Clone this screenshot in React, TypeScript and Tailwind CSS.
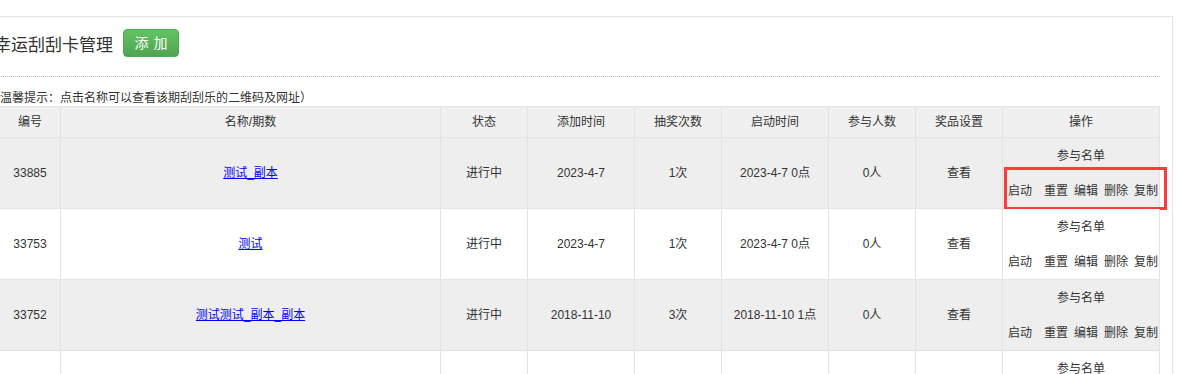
import React from "react";

const cols = "grid-cols-[61px_380px_87px_107px_87px_107px_87px_87px_157px]";

const headers = ["编号", "名称/期数", "状态", "添加时间", "抽奖次数", "启动时间", "参与人数", "奖品设置", "操作"];

const rows = [
  { id: "33885", name: "测试_副本", status: "进行中", added: "2023-4-7", times: "1次", start: "2023-4-7 0点", people: "0人", marked: true },
  { id: "33753", name: "测试", status: "进行中", added: "2023-4-7", times: "1次", start: "2023-4-7 0点", people: "0人" },
  { id: "33752", name: "测试测试_副本_副本", status: "进行中", added: "2018-11-10", times: "3次", start: "2018-11-10 1点", people: "0人" },
  { id: "33751", name: "测试", status: "进行中", added: "2018-11-10", times: "1次", start: "2018-11-10 0点", people: "0人" },
];

function Cell({ children, className = "" }: { children?: React.ReactNode; className?: string }) {
  return (
    <div className={`flex items-center justify-center whitespace-nowrap border-r border-b border-[#e3e3e3] ${className}`}>
      {children}
    </div>
  );
}

export default function App() {
  return (
    <div className="w-[1177px] h-[374px] overflow-hidden bg-white text-[12px] text-[#333] font-['Liberation_Sans','Noto_Sans_CJK_SC',sans-serif]">
      <div className="ml-[-24px] mt-[16px] w-[1197px] border-t border-r border-[#e3e3e3] pl-[23px] pr-[12px] pt-[12px]">
        {/* title bar */}
        <div className="flex items-center h-[28px]">
          <h2 className="ml-[-5px] text-[17px] leading-none text-[#333] font-['Noto_Sans_CJK_SC',sans-serif] whitespace-nowrap">幸运刮刮卡管理</h2>
          <button className="ml-[10px] w-[56px] h-[28px] rounded-[4px] border border-[#4cae4c] bg-gradient-to-b from-[#62c462] to-[#51a351] text-white text-[14px] tracking-[5px] pl-[5px] leading-none whitespace-nowrap">
            添加
          </button>
        </div>
        <div className="mt-[19px] border-b border-dotted border-[#bbb]" />

        <div className="mt-[13px] ml-[-11px] h-[16px] leading-[16px] text-[12px] text-[#333] whitespace-nowrap">
          （温馨提示：点击名称可以查看该期刮刮乐的二维码及网址）
        </div>

        {/* table */}
        <div className={`grid ${cols} border-t border-l border-[#e3e3e3]`}>
          {headers.map((h) => (
            <Cell key={h} className="h-[31px] bg-[#f0f0f0]">{h}</Cell>
          ))}
          {rows.map((r, i) => {
            const bg = i % 2 === 0 ? "bg-[#eeeeee]" : "bg-white";
            return (
              <React.Fragment key={r.id + i}>
                <Cell className={`h-[71px] ${bg}`}>{r.id}</Cell>
                <Cell className={`h-[71px] ${bg}`}>
                  <a href="#" className="text-[#0000ff] underline">{r.name}</a>
                </Cell>
                <Cell className={`h-[71px] ${bg}`}>{r.status}</Cell>
                <Cell className={`h-[71px] ${bg}`}>{r.added}</Cell>
                <Cell className={`h-[71px] ${bg}`}>{r.times}</Cell>
                <Cell className={`h-[71px] ${bg}`}>{r.start}</Cell>
                <Cell className={`h-[71px] ${bg}`}>{r.people}</Cell>
                <Cell className={`h-[71px] ${bg}`}>查看</Cell>
                <Cell className={`relative h-[71px] ${bg} flex-col`}>
                  <div className="h-[36px] leading-[36px]">参与名单</div>
                  <div className="h-[36px] flex items-center pl-[4px] whitespace-nowrap">
                    <span className="shrink-0 mr-[12px]">启动</span>
                    <span className="shrink-0 mr-[6px]">重置</span>
                    <span className="shrink-0 mr-[6px]">编辑</span>
                    <span className="shrink-0 mr-[6px]">删除</span>
                    <span className="shrink-0">复制</span>
                  </div>
                  {r.marked && (
                    <div className="absolute left-[1px] top-[29px] w-[163px] h-[43px] border-[3px] border-[#ff3a3a]" />
                  )}
                </Cell>
              </React.Fragment>
            );
          })}
        </div>
      </div>
    </div>
  );
}
